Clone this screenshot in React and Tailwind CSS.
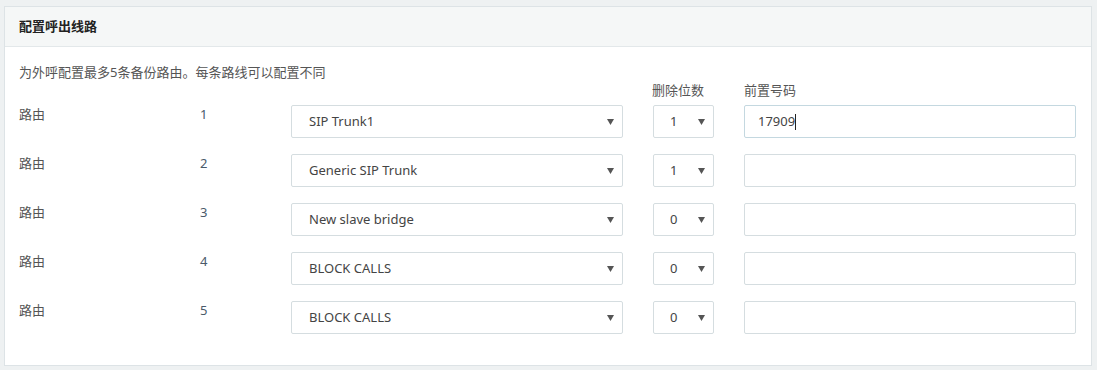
const rows = [
  { n: '1', trunk: 'SIP Trunk1', strip: '1', prefix: '17909' },
  { n: '2', trunk: 'Generic SIP Trunk', strip: '1', prefix: '' },
  { n: '3', trunk: 'New slave bridge', strip: '0', prefix: '' },
  { n: '4', trunk: 'BLOCK CALLS', strip: '0', prefix: '' },
  { n: '5', trunk: 'BLOCK CALLS', strip: '0', prefix: '' },
];

const Caret = () => (
  <svg width="7" height="6" viewBox="0 0 7 6" className="shrink-0">
    <path d="M0 0h7L3.5 6z" fill="#555" />
  </svg>
);

export default function App() {
  return (
    <div
      className="w-[1097px] h-[370px] bg-[#eef1f2] pt-[6px] pl-[4px] text-[13px] text-[#555]"
      style={{ fontFamily: '"Noto Sans", "Noto Sans CJK SC", sans-serif' }}
    >
      <div className="w-[1088px] h-[360px] bg-white border border-[#dde3e6]">
        {/* Header */}
        <div className="h-[40px] bg-[#f5f7f7] border-b border-[#e3e8ea] flex items-center px-[14px]">
          <span className="font-bold text-[#222] text-[13px]">配置呼出线路</span>
        </div>

        <div className="px-[14px] pt-[15px]">
          <p className="leading-[20px]">为外呼配置最多5条备份路由。每条路线可以配置不同</p>

          <div className="flex h-[18px] -mt-[1px] leading-[18px]">
            <span className="ml-[633px] w-[92px]">删除位数</span>
            <span>前置号码</span>
          </div>

          <div className="flex flex-col gap-[16px] mt-[6px]">
            {rows.map((r) => (
              <div key={r.n} className="flex items-start">
                <span className="w-[181px] leading-[18px]">路由</span>
                <span className="w-[91px] leading-[18px] text-[#4a5a6a]">{r.n}</span>
                <div className="w-[332px] h-[33px] border border-[#d5dde0] rounded-[2px] flex items-center justify-between pl-[17px] pr-[8px] text-[#444]">
                  <span>{r.trunk}</span>
                  <Caret />
                </div>
                <div className="ml-[30px] w-[61px] h-[33px] border border-[#d5dde0] rounded-[2px] flex items-center justify-between pl-[16px] pr-[8px] text-[#444]">
                  <span>{r.strip}</span>
                  <Caret />
                </div>
                <div
                  className={`ml-[30px] w-[332px] h-[33px] border rounded-[2px] flex items-center pl-[13px] text-[#444] ${
                    r.prefix ? 'border-[#c4d8e0]' : 'border-[#d5dde0]'
                  }`}
                >
                  {r.prefix && (
                    <>
                      <span>{r.prefix}</span>
                      <span className="w-px h-[16px] bg-[#222]" />
                    </>
                  )}
                </div>
              </div>
            ))}
          </div>
        </div>
      </div>
    </div>
  );
}
